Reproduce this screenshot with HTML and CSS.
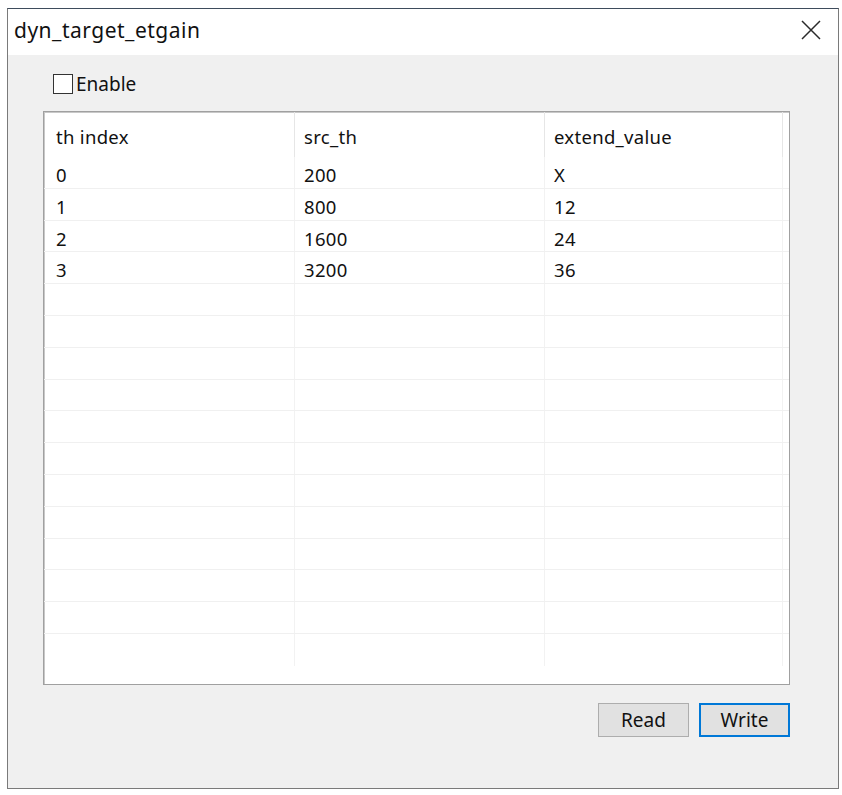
FILE: index.html
```html
<html>
    <head>
    <title>dyn_target_etgain</title>
    <meta http-equiv="Content-Type" content="text/html; charset=utf-8" />
    <link rel="stylesheet" href="styles.css">
    </head>

    <body>
    <!-- janela do dialogo -->
    <div class="dialog">
        <div class="titlebar">
            <span class="title">dyn_target_etgain</span>
            <span class="close">
                <svg width="20" height="20" viewBox="0 0 20 20"><path d="M1 1 L19 19 M19 1 L1 19" stroke="#2a2a2a" stroke-width="1.5" fill="none"/></svg>
            </span>
        </div>

        <div class="content">
            <label class="enable"><span class="checkbox"></span>Enable</label>

            <!-- tabela de thresholds -->
            <div class="table">
                <div class="row header">
                    <div class="cell">th index</div>
                    <div class="cell">src_th</div>
                    <div class="cell">extend_value</div>
                </div>
                <div class="row"><div class="cell">0</div><div class="cell">200</div><div class="cell">X</div></div>
                <div class="row"><div class="cell">1</div><div class="cell">800</div><div class="cell">12</div></div>
                <div class="row"><div class="cell">2</div><div class="cell">1600</div><div class="cell">24</div></div>
                <div class="row"><div class="cell">3</div><div class="cell">3200</div><div class="cell">36</div></div>
                <div class="row"><div class="cell"></div><div class="cell"></div><div class="cell"></div></div>
                <div class="row"><div class="cell"></div><div class="cell"></div><div class="cell"></div></div>
                <div class="row"><div class="cell"></div><div class="cell"></div><div class="cell"></div></div>
                <div class="row"><div class="cell"></div><div class="cell"></div><div class="cell"></div></div>
                <div class="row"><div class="cell"></div><div class="cell"></div><div class="cell"></div></div>
                <div class="row"><div class="cell"></div><div class="cell"></div><div class="cell"></div></div>
                <div class="row"><div class="cell"></div><div class="cell"></div><div class="cell"></div></div>
                <div class="row"><div class="cell"></div><div class="cell"></div><div class="cell"></div></div>
                <div class="row"><div class="cell"></div><div class="cell"></div><div class="cell"></div></div>
                <div class="row"><div class="cell"></div><div class="cell"></div><div class="cell"></div></div>
                <div class="row"><div class="cell"></div><div class="cell"></div><div class="cell"></div></div>
                <div class="row last"><div class="cell"></div><div class="cell"></div><div class="cell"></div></div>
            </div>

            <div class="buttons">
                <input type="button" class="btn" value="Read" />
                <input type="button" class="btn default" value="Write" />
            </div>
        </div>
    </div>
    </body>
</html>
```

FILE: styles.css
```css
body {
    margin: 0;
    background-color: white;
    font-family: "Noto Sans", "Open Sans", sans-serif;
    color: #111;
}
.dialog {
    margin: 8px 0 0 7px;
    width: 830px;
    height: 779px;
    border: 1px solid #7a7a7a;
    border-top-color: #3e4c5c;
    background-color: #f0f0f0;
    display: flex;
    flex-direction: column;
}
.titlebar {
    height: 46px;
    background-color: white;
    display: flex;
    align-items: center;
    justify-content: space-between;
    padding: 0 0 0 6px;
}
.title {
    font-size: 21px;
    letter-spacing: 0.5px;
    color: #111;
    margin-top: -4px;
}
.close {
    width: 46px;
    display: flex;
    justify-content: center;
    margin-top: -4px;
    margin-right: 4px;
}
.content {
    flex: 1;
    display: flex;
    flex-direction: column;
    padding: 0 0 0 35px;
}
.enable {
    display: flex;
    align-items: center;
    font-size: 19px;
    margin: 18px 0 0 10px;
    height: 22px;
}
.checkbox {
    width: 18px;
    height: 18px;
    border: 1px solid #333;
    background-color: white;
    margin-right: 3px;
}
.table {
    margin-top: 16px;
    width: 745px;
    height: 572px;
    background-color: white;
    border: 1px solid #a0a0a0;
    box-shadow: inset 1px 1px 0 #c8c8c8;
    overflow: hidden;
    font-size: 18.5px;
    letter-spacing: 0.3px;
}
.row {
    display: grid;
    grid-template-columns: 251px 250px 238px;
    height: 31.8px;
    border-bottom: 1px solid #f0f0f0;
    box-sizing: border-box;
}
.row .cell {
    border-right: 1px solid #f2f2f2;
    padding: 8px 0 0 9px;
    line-height: 20px;
    box-sizing: border-box;
}
.row .cell:first-child {
    padding-left: 12px;
}
.row.header {
    height: 45px;
    border-bottom: none;
}
.row.header .cell {
    padding-top: 15px;
    border-right-color: #e6e6e6;
}
.row.last {
    border-bottom: none;
}
.buttons {
    display: flex;
    justify-content: flex-end;
    gap: 10px;
    width: 747px;
    margin-top: 18px;
}
.btn {
    width: 91px;
    height: 34px;
    background-color: #e1e1e1;
    border: 1px solid #adadad;
    font-family: "Noto Sans", "Open Sans", sans-serif;
    font-size: 19px;
    color: #111;
    padding: 0;
}
.btn.default {
    border: 2px solid #0078d7;
}
```
